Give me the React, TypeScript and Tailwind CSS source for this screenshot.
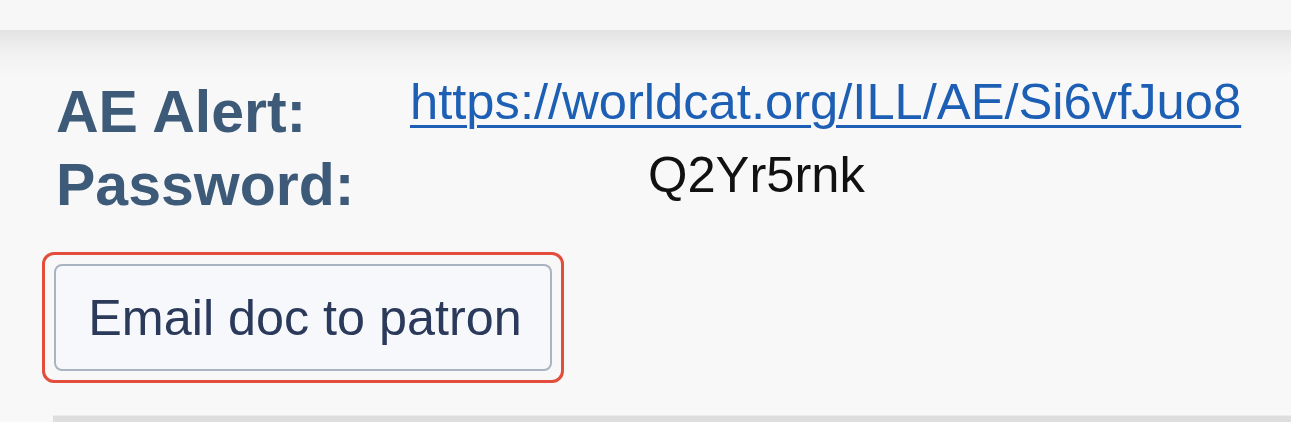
export default function App() {
  return (
    <div className="h-[422px] w-full overflow-hidden bg-[#f8f8f8] font-['Liberation_Sans',Arial,sans-serif]">
      {/* top strip */}
      <div className="h-[30px] bg-[#f7f7f7]" />

      {/* panel */}
      <div className="bg-[linear-gradient(to_bottom,#e3e3e3_0px,#f1f1f1_22px,#f8f8f8_48px)]">
        <div className="flex">
          {/* labels */}
          <div className="w-[410px] pl-[56px] pt-[46px] text-[59px] font-bold leading-[73px] text-[#3d5a79]">
            <div>AE Alert:</div>
            <div>Password:</div>
          </div>

          {/* values */}
          <div className="pt-[35px] text-[50.7px] leading-[73px] text-[#111]">
            <div>
              <a
                href="#"
                className="text-[#1d5fb4] underline decoration-[3px] underline-offset-[6px]"
              >
                https://worldcat.org/ILL/AE/Si6vfJuo8
              </a>
            </div>
            <div className="pl-[238px]">Q2Yr5rnk</div>
          </div>
        </div>

        {/* highlighted action */}
        <div className="pl-[42px] pt-[30px]">
          <div className="inline-block rounded-[12px] border-[3px] border-[#e24e3b] p-[9px]">
            <button
              type="button"
              className="flex h-[107px] w-[498px] items-center justify-center rounded-[8px] border-2 border-[#aab3c2] bg-[#f6f8fb] pl-[4px] text-[50.3px] text-[#2b3a5a]"
            >
              Email doc to patron
            </button>
          </div>
        </div>

        {/* next section edge */}
        <div className="ml-[53px] mt-[32px] h-[10px] border-t border-[#ececec] bg-[#dedede]" />
      </div>
    </div>
  );
}
